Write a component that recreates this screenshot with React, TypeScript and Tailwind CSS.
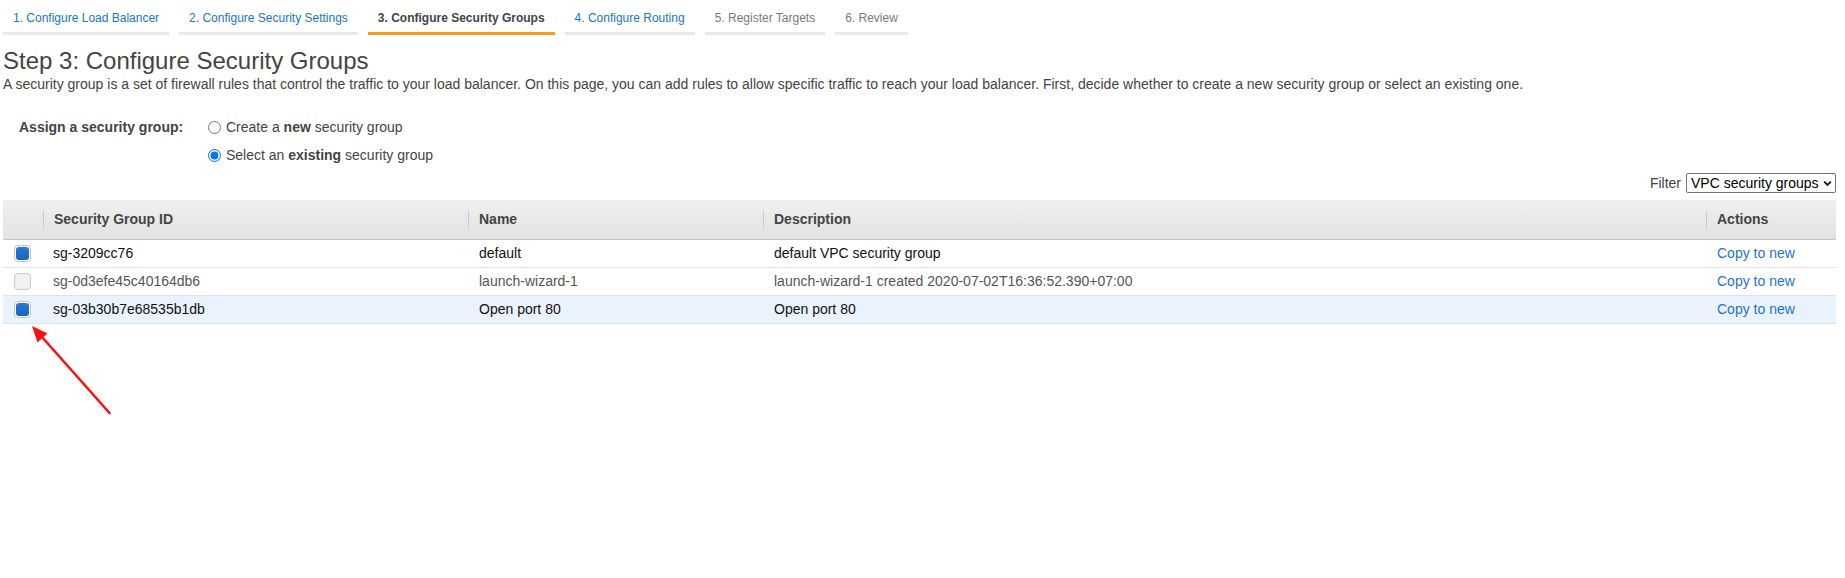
import React from "react";

const font = { fontFamily: '"Liberation Sans", Arial, Helvetica, sans-serif' };

type Tab = { label: string; state: "link" | "active" | "disabled" };
const tabs: Tab[] = [
  { label: "1. Configure Load Balancer", state: "link" },
  { label: "2. Configure Security Settings", state: "link" },
  { label: "3. Configure Security Groups", state: "active" },
  { label: "4. Configure Routing", state: "link" },
  { label: "5. Register Targets", state: "disabled" },
  { label: "6. Review", state: "disabled" },
];

type Row = { id: string; name: string; desc: string; checked: boolean; muted: boolean; highlight: boolean };
const rows: Row[] = [
  { id: "sg-3209cc76", name: "default", desc: "default VPC security group", checked: true, muted: false, highlight: false },
  { id: "sg-0d3efe45c40164db6", name: "launch-wizard-1", desc: "launch-wizard-1 created 2020-07-02T16:36:52.390+07:00", checked: false, muted: true, highlight: false },
  { id: "sg-03b30b7e68535b1db", name: "Open port 80", desc: "Open port 80", checked: true, muted: false, highlight: true },
];

function Checkbox({ checked }: { checked: boolean }) {
  return checked ? (
    <div className="w-[17px] h-[17px] rounded-[4px] border border-[#c4c4c4] bg-white p-[1px]">
      <div className="w-full h-full rounded-[3px] bg-gradient-to-b from-[#2a7ad6] to-[#1863c0]" />
    </div>
  ) : (
    <div className="w-[17px] h-[17px] rounded-[4px] border border-[#c8c8c8] bg-[#f1f1f1]" />
  );
}

function HeaderCell({ label, divider = true }: { label?: string; divider?: boolean }) {
  return (
    <div className="flex items-center h-full">
      {divider && <div className="w-px h-[18px] bg-[#c8c8c8]" />}
      {label && <span className="pl-[10px] font-bold text-[14px] text-[#444]">{label}</span>}
    </div>
  );
}

export default function App() {
  return (
    <div className="relative w-[1845px] min-h-[578px] bg-white pl-[3px]" style={font}>
      {/* Wizard tabs */}
      <div className="flex gap-[10px]">
        {tabs.map((t) => (
          <div
            key={t.label}
            className={
              "px-[10px] pt-[11px] pb-[7px] leading-[14px] text-[12px] border-b-[3px] whitespace-nowrap " +
              (t.state === "active"
                ? "border-[#f59a23] text-[#444] font-bold"
                : t.state === "link"
                ? "border-[#e9e9e9] text-[#2174c9]"
                : "border-[#e9e9e9] text-[#7a7a7a]")
            }
          >
            {t.label}
          </div>
        ))}
      </div>

      {/* Title */}
      <h1 className="mt-[12px] text-[24px] leading-[28px] text-[#444] font-normal">Step 3: Configure Security Groups</h1>
      <p className="text-[14px] leading-[18px] text-[#444]">
        A security group is a set of firewall rules that control the traffic to your load balancer. On this page, you can add rules to allow specific traffic to reach your load balancer. First, decide whether to create a new security group or select an existing one.
      </p>

      {/* Assign */}
      <div className="mt-[20px] pl-[16px] grid grid-cols-[189px_auto] text-[14px] text-[#444]">
        <div className="h-[28px] flex items-center font-bold">Assign a security group:</div>
        <label className="h-[28px] flex items-center gap-[5px]">
          <input type="radio" name="sg" className="m-0 w-[13px] h-[13px]" readOnly />
          <span>
            Create a <b>new</b> security group
          </span>
        </label>
        <div />
        <label className="h-[28px] flex items-center gap-[5px]">
          <input type="radio" name="sg" className="m-0 w-[13px] h-[13px]" defaultChecked />
          <span>
            Select an <b>existing</b> security group
          </span>
        </label>
      </div>

      {/* Filter */}
      <div className="mt-[3px] h-[22px] w-[1833px] flex items-center justify-end gap-[5px] text-[14px]">
        <span className="text-[#444]">Filter</span>
        <div className="h-[20px] w-[150px] border border-[#767676] rounded-[2px] flex items-center justify-between pl-[4px] pr-[3px] text-black">
          <span>VPC security groups</span>
          <svg width="9" height="7" viewBox="0 0 9 7">
            <path d="M1.2 1.6 L4.5 4.9 L7.8 1.6" fill="none" stroke="#111" strokeWidth="1.8" />
          </svg>
        </div>
      </div>

      {/* Table */}
      <div className="mt-[6px] w-[1833px] text-[14px]">
        <div className="grid grid-cols-[40px_425px_295px_943px_130px] h-[40px] bg-gradient-to-b from-[#f0f0f0] to-[#e2e2e2] border-b border-[#c6c6c6]">
          <HeaderCell divider={false} />
          <HeaderCell label="Security Group ID" />
          <HeaderCell label="Name" />
          <HeaderCell label="Description" />
          <HeaderCell label="Actions" />
        </div>
        {rows.map((r) => (
          <div
            key={r.id}
            className={
              "grid grid-cols-[40px_425px_295px_943px_130px] h-[28px] items-center border-b " +
              (r.highlight ? "bg-[#eaf2fd] border-[#dde3ea]" : "bg-white border-[#e2e2e2]") +
              (r.muted ? " text-[#555]" : " text-[#111]")
            }
          >
            <div className="pl-[11px] flex items-center">
              <Checkbox checked={r.checked} />
            </div>
            <div className="pl-[10px]">{r.id}</div>
            <div className="pl-[11px]">{r.name}</div>
            <div className="pl-[11px]">{r.desc}</div>
            <div className="pl-[11px] text-[#1f72cf]">Copy to new</div>
          </div>
        ))}
      </div>

      {/* Red annotation arrow */}
      <svg className="absolute left-0 top-0 pointer-events-none" width="130" height="430" viewBox="0 0 130 430">
        <line x1="109.5" y1="413" x2="42" y2="337" stroke="#ff1010" strokeWidth="2.6" strokeLinecap="round" />
        <polygon points="32,326 47.5,333.5 37.5,342.5" fill="#ff1010" />
      </svg>
    </div>
  );
}
